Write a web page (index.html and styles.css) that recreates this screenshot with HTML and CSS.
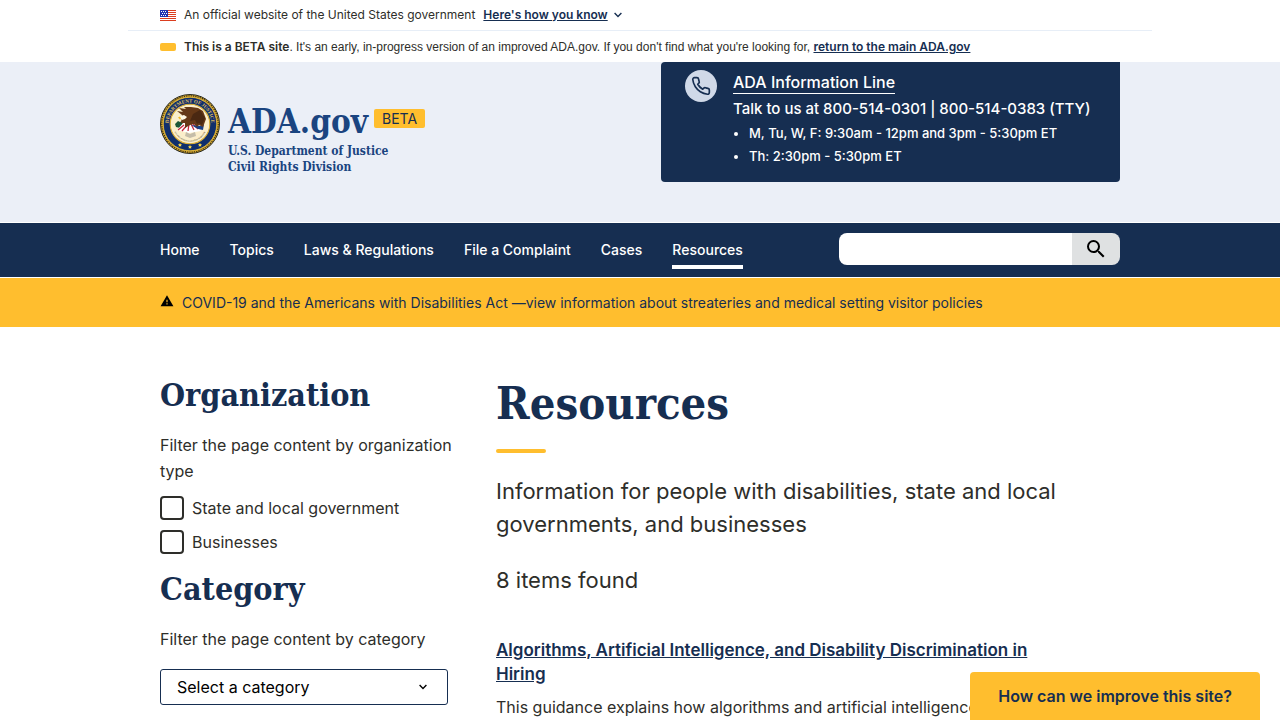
FILE: index.html
```html
<!DOCTYPE html>
<html lang="en">
<head>
<meta charset="utf-8">
<meta name="viewport" content="width=device-width, initial-scale=1">
<title>Resources | ADA.gov</title>
<link rel="stylesheet" href="styles.css">
</head>
<body>
<div class="banner">
  <div class="banner-row banner-official">
    <svg class="banner-mark" viewBox="0 0 16 11" aria-hidden="true">
      <path fill="#fff" d="M0 0h16v11H0z"/>
      <path fill="#db3e1f" d="M0 0h16v1H0zM0 2h16v1H0zM0 4h16v1H0zM0 6h16v1H0zM0 8h16v1H0zM0 10h16v1H0z"/>
      <path fill="#1e33b1" d="M0 0h8v7H0z"/>
      <path fill="#fff" d="M1 1h1v1H1zM3 1h1v1H3zM5 1h1v1H5zM2 3h1v1H2zM4 3h1v1H4zM6 3h1v1H6zM1 5h1v1H1zM3 5h1v1H3zM5 5h1v1H5z"/>
    </svg>
    <span>An official website of the United States government</span>
    <button class="banner-toggle" type="button"><span>Here's how you know</span>
      <svg class="chevron" viewBox="0 0 8 6" aria-hidden="true"><path d="M.6 1 4 4.4 7.4 1" fill="none" stroke="currentColor" stroke-width="1.4"/></svg>
    </button>
  </div>
  <div class="banner-row banner-beta">
    <span class="beta-mark"></span>
    <p><strong>This is a BETA site</strong>. It's an early, in-progress version of an improved ADA.gov. If you don't find what you're looking for, <a href="#main">return to the main ADA.gov</a></p>
  </div>
</div>

<header class="header">
  <div class="container header-inner">
    <div class="brand">
      <svg class="seal" viewBox="0 0 60 60" role="img" aria-label="Department of Justice seal">
        <defs>
          <path id="arc-top" d="M13.3 43.3A21.4 21.4 0 1 1 46.7 43.3"/>
          <path id="arc-low" d="M13.2 34.5A17.3 17.3 0 0 0 46.8 34.5"/>
        </defs>
        <circle cx="30" cy="30" r="29.5" fill="#d5a72d" stroke="#29291f"/>
        <circle cx="30" cy="30" r="28.2" fill="none" stroke="#382f17" stroke-width="1.2" stroke-dasharray="1.2 1.1"/>
        <circle cx="30" cy="30" r="26.8" fill="#102f6c" stroke="#e3b93c" stroke-width=".9"/>
        <circle cx="30" cy="30" r="19.8" fill="#fbeecb" stroke="#d9ad37" stroke-width="1.1"/>
        <text class="seal-title"><textPath href="#arc-top" startOffset="50%" text-anchor="middle">DEPARTMENT OF JUSTICE</textPath></text>
        <text class="seal-motto"><textPath href="#arc-low" startOffset="50%" text-anchor="middle">QUI PRO DOMINA JUSTITIA SEQUITUR</textPath></text>
        <path fill="#1b5638" d="m15 30 3-3 2 1 2-1 1 3-3 4-4-1z"/>
        <path fill="#fff" d="m17 36 7-8 11 1 6 8-12 2z"/>
        <path fill="none" stroke="#c5283d" stroke-width="1.3" d="m18 36 6-5m-2 6 6-7m0 7 1-7m5 6-3-6m7 5-5-5"/>
        <path fill="#183f87" d="m31 31 9 1 4-2-1 6-5-1z"/>
        <path fill="#653817" d="m22 21-5-4 6 1-4-4 7 1-2-2 7 0 7 1 5 3 3 8-3 8-4-2-2 2-3-3-4 1-5 3 0-5-4 0z"/>
        <path fill="#4a2812" d="m33 20 7-4 5 8-3 7-3-2-2 1-2-4-5 1z"/>
        <path fill="#fff8e3" d="m20 22 4-1 3 2-2 2-3 1-2-2z"/>
        <path fill="#f0b727" d="m20 22.5-2 1 2 2 1-1z"/>
        <path fill="#c5bda9" d="m26 38 4 2 5-2 1 4-6 2-5-2z"/>
        <path fill="#ffdc47" d="m20 49 .7 1.2 1.3.2-1 1 .2 1.4-1.2-.7-1.3.7.3-1.4-1-1 1.3-.2zM30 51l.7 1.2 1.3.2-1 1 .2 1.4-1.2-.7-1.3.7.3-1.4-1-1 1.3-.2zM40 49l.7 1.2 1.3.2-1 1 .2 1.4-1.2-.7-1.3.7.3-1.4-1-1 1.3-.2z"/>
      </svg>
      <div>
        <div class="brand-line"><a class="brand-name" href="#main">ADA.gov</a><span class="beta-tag">BETA</span></div>
        <p class="brand-sub">U.S. Department of Justice<br>Civil Rights Division</p>
      </div>
    </div>
    <section class="info">
      <span class="phone">
        <svg viewBox="0 0 24 24" aria-hidden="true"><path fill="none" stroke="#162e51" stroke-width="2" stroke-linejoin="round" stroke-linecap="round" d="M22 16.92v3a2 2 0 0 1-2.18 2 19.8 19.8 0 0 1-8.63-3.07 19.5 19.5 0 0 1-6-6 19.8 19.8 0 0 1-3.07-8.67A2 2 0 0 1 4.11 2h3a2 2 0 0 1 2 1.72c.13.96.36 1.9.7 2.81a2 2 0 0 1-.45 2.11L8.09 9.91a16 16 0 0 0 6 6l1.27-1.27a2 2 0 0 1 2.11-.45c.91.34 1.85.57 2.81.7A2 2 0 0 1 22 16.92z"/></svg>
      </span>
      <div>
        <a class="info-title" href="#main">ADA Information Line</a>
        <p class="info-talk">Talk to us at 800-514-0301 | 800-514-0383 (TTY)</p>
        <ul class="info-hours">
          <li>M, Tu, W, F: 9:30am - 12pm and 3pm - 5:30pm ET</li>
          <li>Th: 2:30pm - 5:30pm ET</li>
        </ul>
      </div>
    </section>
  </div>
</header>

<nav class="nav" aria-label="Primary">
  <div class="container nav-inner">
    <ul class="nav-list">
      <li><a href="#main">Home</a></li>
      <li><a href="#main">Topics</a></li>
      <li><a href="#main">Laws &amp; Regulations</a></li>
      <li><a href="#main">File a Complaint</a></li>
      <li><a href="#main">Cases</a></li>
      <li><a class="current" href="#main" aria-current="page">Resources</a></li>
    </ul>
    <form class="search" role="search">
      <input type="search" aria-label="Search">
      <button type="button" aria-label="Search"><svg viewBox="0 0 24 24" aria-hidden="true"><path d="M15.5 14h-.79l-.28-.27A6.47 6.47 0 0 0 16 9.5 6.5 6.5 0 1 0 9.5 16c1.61 0 3.09-.59 4.23-1.57l.27.28v.79l5 4.99L20.49 19l-4.99-5zm-6 0C7.01 14 5 11.99 5 9.5S7.01 5 9.5 5 14 7.01 14 9.5 11.99 14 9.5 14z"/></svg></button>
    </form>
  </div>
</nav>

<div class="alert">
  <div class="container alert-inner">
    <svg viewBox="0 0 24 24" aria-hidden="true"><path d="M1 21h22L12 2 1 21zm12-3h-2v-2h2v2zm0-4h-2v-4h2v4z"/></svg>
    <a href="#main">COVID-19 and the Americans with Disabilities Act —view information about streateries and medical setting visitor policies</a>
  </div>
</div>

<main class="container layout" id="main">
  <aside class="filters">
    <h2>Organization</h2>
    <p class="hint">Filter the page content by organization type</p>
    <div class="checks">
      <label><input type="checkbox">State and local government</label>
      <label><input type="checkbox">Businesses</label>
    </div>
    <h2>Category</h2>
    <p class="hint" id="category-hint">Filter the page content by category</p>
    <div class="select-wrap">
      <select aria-labelledby="category-hint"><option>Select a category</option></select>
      <svg class="chevron" viewBox="0 0 8 6" aria-hidden="true"><path d="M.6 1 4 4.4 7.4 1" fill="none" stroke="currentColor" stroke-width="1.4"/></svg>
    </div>
  </aside>
  <section class="content">
    <h1>Resources</h1>
    <p class="lead">Information for people with disabilities, state and local governments, and businesses</p>
    <p class="lead">8 items found</p>
    <article>
      <h3><a href="#main">Algorithms, Artificial Intelligence, and Disability Discrimination in Hiring</a></h3>
      <p>This guidance explains how algorithms and artificial intelligence</p>
    </article>
  </section>
</main>
<button class="feedback" type="button">How can we improve this site?</button>
</body>
</html>
```
FILE: styles.css
```css
:root {
  --navy: #162e51;
  --gold: #ffbe2e;
  --ink: #2e2e2a;
  --sans: Inter, "Liberation Sans", sans-serif;
  --serif: "DejaVu Serif Condensed", "DejaVu Serif", serif;
}
* { box-sizing: border-box; }
body {
  margin: 0;
  color: var(--ink);
  background: #fff;
  font: 16px/26px var(--sans);
}
h1, h2, h3, p, ul { margin: 0; }
a { color: inherit; }
button, input, select { font: inherit; }
.container, .banner-row {
  width: 100%;
  max-width: 1024px;
  margin: 0 auto;
  padding: 0 32px;
}

.banner { font-size: 12px; line-height: 16px; }
.banner-row {
  display: flex;
  align-items: center;
  gap: 8px;
  min-height: 31px;
}
.banner-official { border-bottom: 1px solid #e7eef7; }
.banner-beta { font-family: "Liberation Sans", sans-serif; }
.banner-beta strong, .banner-beta a { font-family: var(--sans); font-weight: 600; }
.banner-mark { width: 16px; height: 11px; }
.banner-toggle {
  display: flex;
  align-items: center;
  gap: 6px;
  padding: 0;
  border: 0;
  background: none;
  color: var(--navy);
  font-weight: 600;
}
.banner-toggle span { text-decoration: underline; }
.chevron { width: 8px; height: 6px; }
.beta-mark { width: 16px; height: 8px; border-radius: 2px; background: var(--gold); }
.banner a { color: var(--navy); }

.header { min-height: 160px; background: #ebeff7; }
.header-inner { display: flex; justify-content: space-between; align-items: flex-start; }
.brand {
  display: flex;
  gap: 8px;
  padding-top: 32px;
  color: #1a4480;
  font-family: var(--serif);
  font-weight: 700;
}
.seal { width: 60px; height: 60px; flex: none; }
.seal-title { font: 700 5px "Liberation Serif", serif; fill: #e3c161; }
.seal-motto { font: 700 2px "Liberation Serif", serif; fill: #66603f; }
.brand-line { display: flex; align-items: center; gap: 6px; height: 49px; }
.brand-name { padding-top: 6px; font-size: 33px; line-height: 43px; text-decoration: none; }
.beta-tag {
  padding: 0 8px;
  border-radius: 2px;
  background: var(--gold);
  color: var(--navy);
  font: 14px/19px var(--sans);
}
.brand-sub { font-size: 12px; line-height: 16px; }
.info {
  display: flex;
  gap: 16px;
  min-width: 459px;
  min-height: 120px;
  padding: 8px 24px 12px;
  border-radius: 4px 0 4px 4px;
  background: var(--navy);
  color: #fff;
  font-weight: 500;
}
.phone {
  display: grid;
  place-items: center;
  width: 32px;
  height: 32px;
  border-radius: 50%;
  background: #d0d9e8;
}
.phone svg { width: 20px; height: 20px; }
.info-title {
  display: block;
  width: fit-content;
  margin-top: 1px;
  line-height: 22px;
  border-bottom: 1px solid #fff;
  text-decoration: none;
}
.info-talk { margin-top: 2px; font-size: 15px; line-height: 26px; }
.info-hours { padding-left: 16px; font-size: 13px; line-height: 23px; }

.nav { margin-top: 1px; background: var(--navy); color: #fff; }
.nav-inner { display: flex; justify-content: space-between; align-items: center; min-height: 54px; }
.nav-list {
  display: flex;
  gap: 30px;
  padding: 0;
  list-style: none;
  font-size: 14px;
  line-height: 20px;
  font-weight: 500;
}
.nav-list a {
  display: block;
  padding: 9px 0 5px;
  border-bottom: 4px solid transparent;
  text-decoration: none;
}
.nav-list .current { border-color: #fff; }
.search { display: flex; width: 281px; height: 32px; margin-bottom: 2px; border-radius: 8px; overflow: hidden; }
.search input { flex: 1; min-width: 0; padding: 0 8px; border: 0; background: #fff; }
.search button { display: grid; place-items: center; width: 48px; padding: 0; border: 0; background: #dfe1e2; }
.search svg { width: 24px; height: 24px; }

.alert { margin-top: 1px; background: var(--gold); color: var(--navy); }
.alert-inner { display: flex; align-items: center; gap: 8px; min-height: 49px; font-size: 14px; line-height: 22px; }
.alert svg { width: 14px; height: 14px; margin-bottom: 4px; fill: #000; }
.alert a { text-decoration: none; }

.layout { display: grid; grid-template-columns: 288px minmax(0, 1fr); gap: 48px; padding-top: 47px; }
h1, h2 { color: var(--navy); font-family: var(--serif); font-weight: 700; }
h2 { margin-bottom: 16px; font-size: 32px; line-height: 42px; }
.hint { margin-right: -16px; }
.checks { display: grid; gap: 8px; margin: 11px 0 13px; }
.checks label { display: flex; align-items: center; gap: 8px; }
.checks input {
  appearance: none;
  width: 24px;
  height: 24px;
  margin: 0;
  border: 2px solid var(--ink);
  border-radius: 4px;
  background: #fff;
}
.select-wrap { display: grid; align-items: center; margin-top: 17px; }
.select-wrap > * { grid-area: 1 / 1; }
.select-wrap select {
  appearance: none;
  width: 100%;
  height: 36px;
  padding: 0 16px;
  border: 1px solid var(--navy);
  border-radius: 3px;
  background: #fff;
  color: #000;
}
.select-wrap .chevron { justify-self: end; margin-right: 21px; color: #000; pointer-events: none; }

.content { max-width: 576px; }
h1 { font-size: 45px; line-height: 60px; }
h1::after {
  content: "";
  display: block;
  width: 50px;
  height: 4px;
  margin: 15px 0 22px;
  border-radius: 2px;
  background: var(--gold);
}
.lead { margin-bottom: 23px; font-size: 22px; line-height: 33px; }
article { padding-top: 18px; }
h3 { margin-bottom: 8px; color: var(--navy); font-size: 17px; line-height: 24px; font-weight: 600; }

.feedback {
  position: fixed;
  right: 20px;
  bottom: 0;
  height: 48px;
  padding: 0 28px;
  border: 0;
  border-radius: 4px 4px 0 0;
  background: var(--gold);
  color: var(--navy);
  font-weight: 600;
}
```
